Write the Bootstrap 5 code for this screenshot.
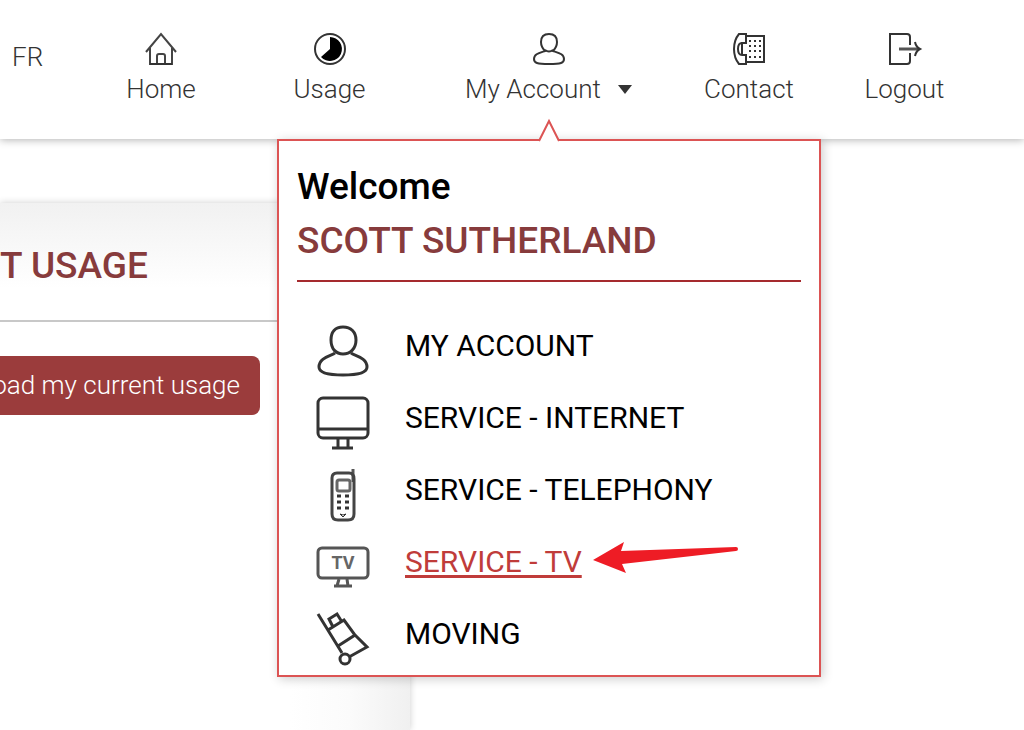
<!DOCTYPE html>
<html lang="en">
<head>
<meta charset="utf-8">
<meta name="viewport" content="width=device-width, initial-scale=1">
<title>My Account</title>
<link href="https://cdn.jsdelivr.net/npm/bootstrap@5.3.0/dist/css/bootstrap.min.css" rel="stylesheet">
<style>
  body { font-family: Roboto, "Liberation Sans", sans-serif; color: #333; overflow: hidden; }
  svg { display: block; fill: none; stroke: #333; stroke-width: 2; overflow: visible; }
  .top-bar { box-shadow: 0 1px 8px rgba(0,0,0,.3); z-index: 2; padding: 33px 0 34px;
    display: grid; grid-template-columns: 86fr 150fr 187fr 252fr 148fr 163fr 38fr; }
  .top-link { color: #333; font-size: 26px; font-weight: 300; line-height: 32px; white-space: nowrap; text-decoration: none; }
  .caret-mark { width: 16px; height: 9px; fill: #333; stroke: none; }
  .account-menu { position: absolute; top: 106px; left: 50%; transform: translateX(-50%); width: 544px;
    padding: 19px 18px 10px; background: #fff; border: 2px solid #dc5454; box-shadow: 2px 2px 10px rgba(0,0,0,.2); }
  .menu-tip { position: absolute; left: 50%; top: -23px; margin-left: -11px; fill: #fff; stroke: #dc5454; }
  .heading-text { font-size: 37px; line-height: 54px; font-weight: 500; margin: 0; white-space: nowrap; }
  .brand-red { color: #873b3c; }
  .menu-head { border-bottom: 2px solid #a52a2e; padding-bottom: 12px; }
  .menu-list { margin: 43px 0 0; padding: 0 20px; gap: 20px; }
  .menu-row { gap: 36px; }
  .menu-row > svg { stroke-width: 3; }
  .menu-row a { font-size: 30px; line-height: 42px; color: #000; text-decoration: none; white-space: nowrap; }
  .menu-row a.current { color: #c03c3a; text-decoration: underline; text-decoration-thickness: 3px; text-underline-offset: 3px; text-decoration-skip-ink: none; }
  .pointer-arrow { position: absolute; left: 276px; top: 0; fill: #ee1c25; stroke: none; }
  .usage-panel { width: 40%; margin-top: 64px; overflow: hidden; box-shadow: 0 0 7px rgba(0,0,0,.2);
    background: linear-gradient(#f1f1f1, rgba(255,255,255,0) 85px), linear-gradient(to left, #f0f0f0, #fbfbfb 60px, #fff 120px); }
  .usage-head { padding: 36px 0 27px; border-bottom: 2px solid #c8c8c8; }
  .usage-action { width: 260px; margin-top: 34px; }
  .usage-btn { background: #9b3c3c; color: #fff; font-size: 26px; font-weight: 300; line-height: 33px; padding: 13px 20px 13px 0; border: 0; border-radius: 0 8px 8px 0; white-space: nowrap; }
</style>
</head>
<body class="d-flex flex-column min-vh-100 bg-white">
<header class="top-bar position-relative bg-white">
  <a class="top-link ps-2 ms-1 pt-2" href="#">FR</a>
  <a class="top-link d-flex flex-column align-items-center gap-2" href="#">
    <svg width="32" height="32" viewBox="0 0 32 32"><path d="M1 19 16 1l15 18M5 15v16h22V15M12 31V23q0-2 2-2h4q2 0 2 2v8" stroke="#444"/><path d="M5 31h22"/></svg>
    Home</a>
  <a class="top-link d-flex flex-column align-items-center gap-2" href="#">
    <svg width="32" height="32" viewBox="0 0 32 32"><circle cx="16" cy="16" r="15"/><path d="M16 4a12 12 0 1 1-9 20l9-8z" fill="#000" stroke="none"/></svg>
    Usage</a>
  <div class="position-relative">
    <a class="top-link d-flex flex-column align-items-center gap-2" href="#">
      <svg width="32" height="32" viewBox="0 0 32 32"><path d="M16 1c-5 0-8 3-8 8 0 4 2 7 4 9-6 2-11 3-11 8 0 4 3 5 15 5s15-1 15-5c0-5-5-6-11-8 2-2 4-5 4-9 0-5-3-8-8-8zM12 17q4 3 8 0"/></svg>
      <span class="d-flex align-items-center gap-3">My Account
        <svg class="caret-mark" viewBox="0 0 16 9"><path d="M1 0h14L8 9z"/></svg></span></a>
    <nav class="account-menu" aria-label="Account">
      <svg class="menu-tip" width="22" height="24" viewBox="0 0 22 24"><path d="M0 25 11 3l11 22z" stroke="none"/><path d="M1 23 11 3l10 20"/></svg>
      <div class="menu-head">
        <p class="heading-text text-black">Welcome</p>
        <h2 class="heading-text brand-red">SCOTT SUTHERLAND</h2>
      </div>
      <ul class="menu-list list-unstyled d-flex flex-column">
        <li class="menu-row d-flex">
          <svg width="52" height="52" viewBox="0 0 52 52"><path d="M18 28c-3 3-16 4-16 14 0 6 11 8 24 8s24-2 24-8c0-10-13-11-16-14"/><path d="M26 2c-8 0-12 5-12 13 0 9 5 14 12 14s13-5 13-14c0-8-5-13-13-13z"/></svg>
          <a href="#">MY ACCOUNT</a></li>
        <li class="menu-row d-flex">
          <svg width="52" height="52" viewBox="0 0 52 52"><rect x="1" y="1" width="50" height="40" rx="5"/><path d="M1 32h50M21 41v9M31 41v9M15 51h21"/></svg>
          <a href="#">SERVICE - INTERNET</a></li>
        <li class="menu-row d-flex">
          <svg width="52" height="52" viewBox="0 0 52 52"><path d="M36 0v13" stroke="#555"/><path d="M20 4h12q5 0 5 6v35q0 6-6 6H21q-6 0-6-6V9q0-5 5-5z" stroke="#444"/><rect x="20" y="11" width="13" height="11" rx="2" stroke="#666"/><path d="M20 27h4m4 0h4m-12 6h4m4 0h4m-12 6h4m4 0h4"/><path d="M23 45q3 2 6 0l-3 3z" stroke-width="1"/></svg>
          <a href="#">SERVICE - TELEPHONY</a></li>
        <li class="menu-row d-flex position-relative">
          <svg width="52" height="52" viewBox="0 0 52 52"><g stroke="#555"><rect x="1" y="7" width="50" height="30" rx="4"/><path d="m22 38-2 7m10-7 1 7M17 45h18"/></g><text x="26" y="28" text-anchor="middle" font-size="18" font-weight="700" fill="#666" stroke="none">TV</text></svg>
          <a class="current" href="#">SERVICE - TV</a>
          <svg class="pointer-arrow" width="146" height="36" viewBox="0 0 146 36"><path d="M0 19 31 1l-3 9 115-4q2 0 2 2t-2 2L29 23l4 9z"/></svg></li>
        <li class="menu-row d-flex">
          <svg width="52" height="52" viewBox="0 0 52 52"><path d="m1 1 24 39M11 17 27 7l11 15-17 11M38 22l12 12-18 10M16 14l-4-8 8-5 5 8"/><circle cx="28" cy="46" r="5"/></svg>
          <a href="#">MOVING</a></li>
      </ul>
    </nav>
  </div>
  <a class="top-link d-flex flex-column align-items-center gap-2" href="#">
    <svg width="32" height="32" viewBox="0 0 32 32"><path d="M6 1h7v9H9q-4 0-4 6t4 6h4v9H6Q1 25 1 16T6 1zM13 10H9v12h4M13 3h18v26H13"/><path d="M16 8h12M16 13h12M16 18h12M16 24h12" stroke-dasharray="2 3"/></svg>
    Contact</a>
  <a class="top-link d-flex flex-column align-items-center gap-2" href="#">
    <svg width="32" height="32" viewBox="0 0 32 32"><path d="M21 12V4q0-3-3-3H1v30h17q3 0 3-3v-8"/><path d="M10 16h20" stroke="#555" stroke-width="3"/><path d="M26 9q1 5 5 7-4 2-5 7"/></svg>
    Logout</a>
</header>
<main class="d-flex flex-grow-1">
  <section class="usage-panel">
    <div class="usage-head"><h1 class="heading-text brand-red">T USAGE</h1></div>
    <div class="usage-action d-flex justify-content-end"><button type="button" class="usage-btn flex-shrink-0">oad my current usage</button></div>
  </section>
</main>
<script src="https://cdn.jsdelivr.net/npm/bootstrap@5.3.0/dist/js/bootstrap.bundle.min.js"></script>
</body>
</html>
